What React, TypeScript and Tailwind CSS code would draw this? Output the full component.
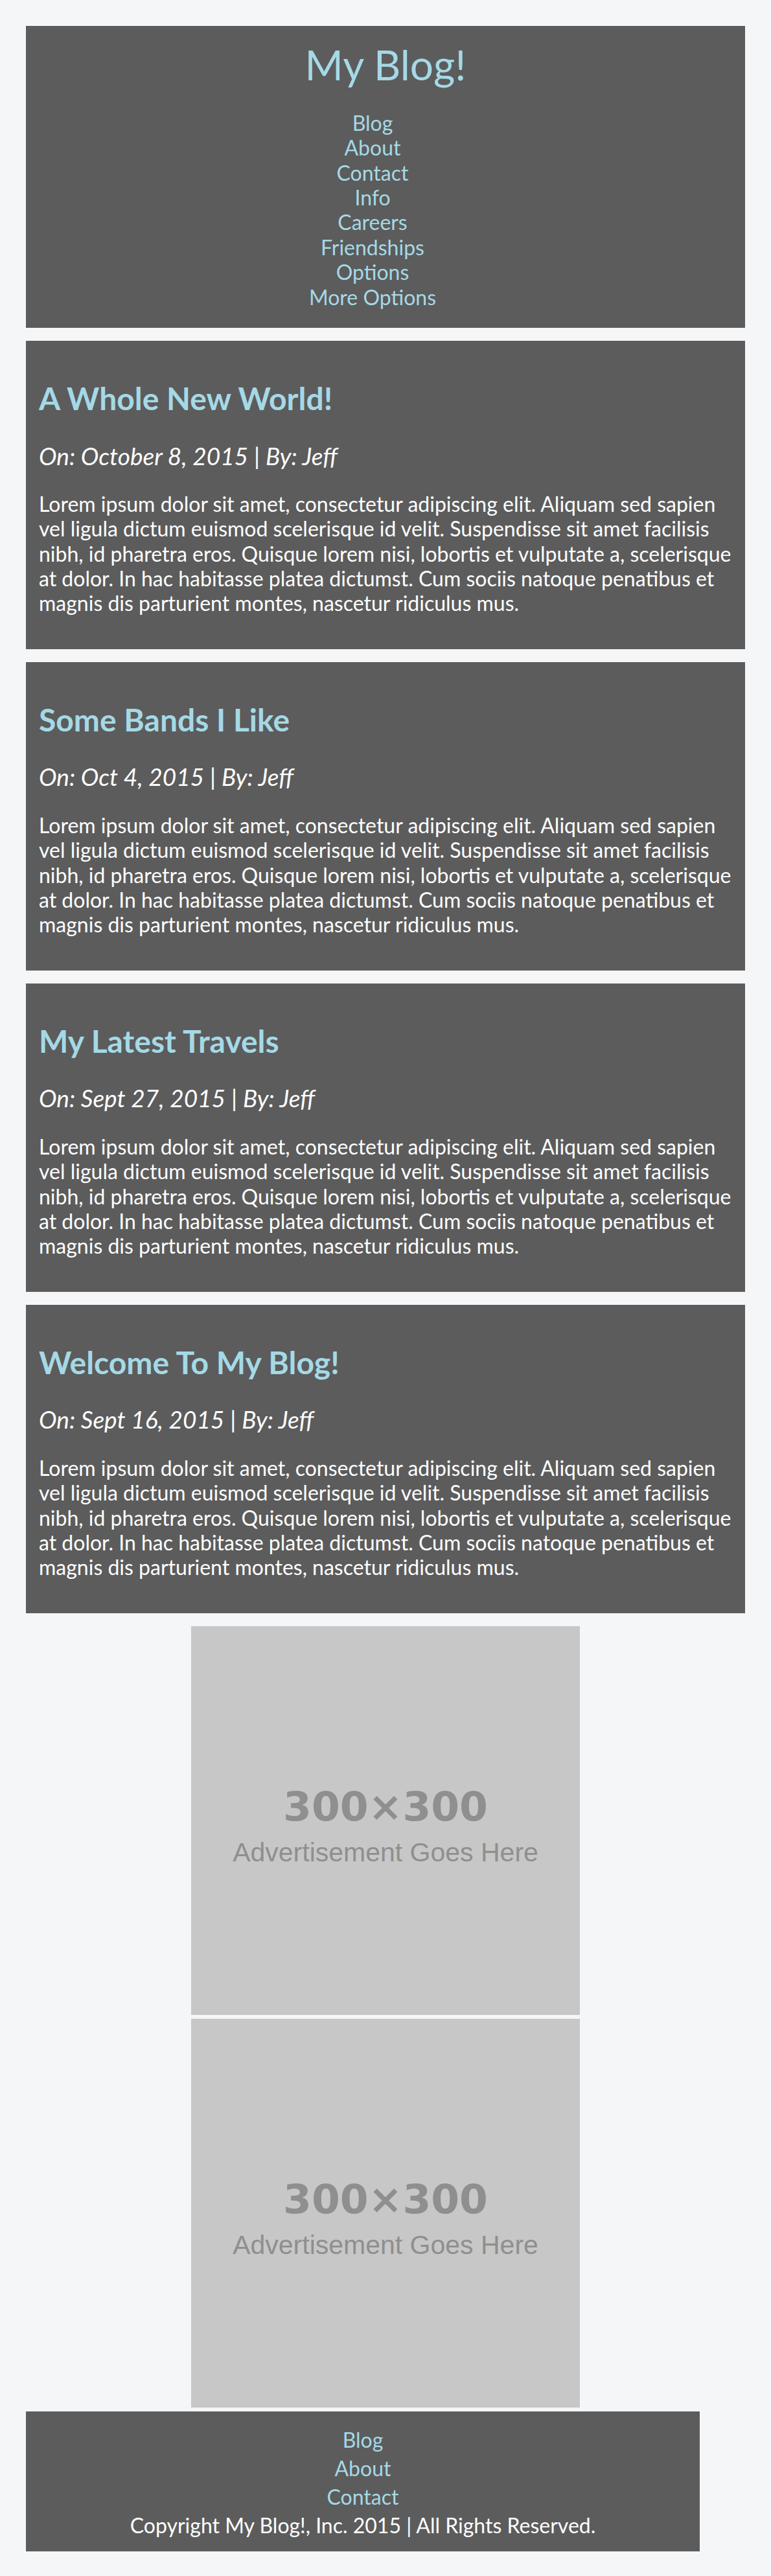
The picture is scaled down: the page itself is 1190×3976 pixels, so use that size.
import React from 'react';

const navLinks = ['Blog', 'About', 'Contact', 'Info', 'Careers', 'Friendships', 'Options', 'More Options'];
const footerLinks = ['Blog', 'About', 'Contact'];

const lorem =
  'Lorem ipsum dolor sit amet, consectetur adipiscing elit. Aliquam sed sapien vel ligula dictum euismod scelerisque id velit. Suspendisse sit amet facilisis nibh, id pharetra eros. Quisque lorem nisi, lobortis et vulputate a, scelerisque at dolor. In hac habitasse platea dictumst. Cum sociis natoque penatibus et magnis dis parturient montes, nascetur ridiculus mus.';

const posts = [
  { title: 'A Whole New World!', date: 'October 8, 2015', author: 'Jeff' },
  { title: 'Some Bands I Like', date: 'Oct 4, 2015', author: 'Jeff' },
  { title: 'My Latest Travels', date: 'Sept 27, 2015', author: 'Jeff' },
  { title: 'Welcome To My Blog!', date: 'Sept 16, 2015', author: 'Jeff' },
];

const Header = () => (
  <header className="w-full bg-[#5c5c5c] pt-[22px] pb-[28px] text-center">
    <h1 className="text-[64px] font-normal leading-[1.2] text-[#a5d9e6]">My Blog!</h1>
    <nav className="mt-[32px] flex flex-col items-center pr-[40px]">
      {navLinks.map((link) => (
        <a key={link} href="#" className="text-[32px] leading-[1.2] text-[#a5d9e6]">
          {link}
        </a>
      ))}
    </nav>
  </header>
);

const Post = ({ title, date, author }: { title: string; date: string; author: string }) => (
  <article className="w-full bg-[#5c5c5c] px-[20px] pt-[60px] pb-[51px]">
    <h2 className="text-[48px] font-bold leading-[1.2] text-[#a5d9e6]">{title}</h2>
    <h3 className="mt-[38px] text-[37px] font-normal italic leading-[1.2] text-white">
      On: {date} | By: {author}
    </h3>
    <p className="mt-[33px] text-[32px] leading-[1.2] text-white">{lorem}</p>
  </article>
);

const Ad = () => (
  <div className="h-[600px] w-[600px] bg-[#c7c7c7] pt-[247px] text-center text-[#8f8f8f]">
    <div className="font-['DejaVu_Sans',sans-serif] text-[63px] font-bold leading-[64px]">300×300</div>
    <div className="mt-[18px] font-['Liberation_Sans',Arial,sans-serif] text-[41px] leading-[41px]">
      Advertisement Goes Here
    </div>
  </div>
);

const Footer = () => (
  <footer className="w-[1040px] bg-[#5c5c5c] pt-[22px] pb-[18px] text-center text-[32px] leading-[44px]">
    <ul className="flex flex-col items-center">
      {footerLinks.map((link) => (
        <li key={link}>
          <a href="#" className="text-[#a5d9e6]">
            {link}
          </a>
        </li>
      ))}
    </ul>
    <p className="text-white">Copyright My Blog!, Inc. 2015 | All Rights Reserved.</p>
  </footer>
);

export default function App() {
  return (
    <div className="min-h-screen bg-[#f5f6f8] px-[40px] pt-[40px] pb-[40px] font-['Lato',sans-serif]">
      <Header />
      <main className="mt-[20px] flex flex-col gap-[20px]">
        {posts.map((post) => (
          <Post key={post.title} {...post} />
        ))}
      </main>
      <aside className="mt-[20px] flex flex-col items-center gap-[6px]">
        <Ad />
        <Ad />
      </aside>
      <div className="mt-[6px]">
        <Footer />
      </div>
    </div>
  );
}
